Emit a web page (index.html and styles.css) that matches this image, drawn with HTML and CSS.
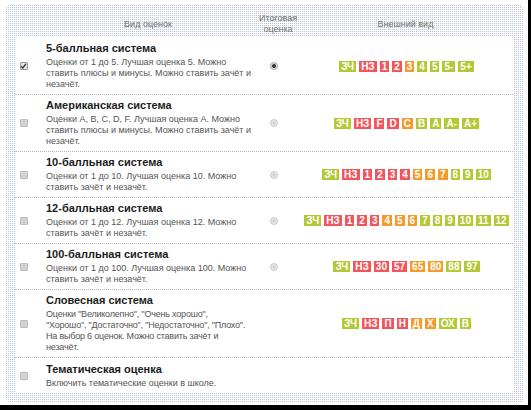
FILE: index.html
```html
<!DOCTYPE html>
<html lang="ru">
<head>
<meta charset="utf-8">
<title>Системы оценок</title>
<link rel="stylesheet" href="styles.css">
</head>
<body>
<div class="frame">
  <div class="head">
    <span></span>
    <span class="h-cell">Вид оценок</span>
    <span class="h-cell">Итоговая<br>оценка</span>
    <span class="h-cell">Внешний вид</span>
  </div>
  <div class="panel">
    <div class="row">
      <span class="cb checked"><svg viewBox="0 0 8 8" width="8" height="8"><path d="M1.3 4.2 L3.2 6.2 L6.8 1.6" fill="none" stroke="#333" stroke-width="1.6"/></svg></span>
      <div class="info">
        <div class="title">5-балльная система</div>
        <div class="desc">Оценки от 1 до 5. Лучшая оценка 5. Можно ставить плюсы и минусы. Можно ставить зачёт и незачёт.</div>
      </div>
      <div class="final"><span class="radio on"></span></div>
      <div class="marks">
        <span class="m g">ЗЧ</span><span class="m r">НЗ</span><span class="m r">1</span><span class="m r">2</span><span class="m o">3</span><span class="m g">4</span><span class="m g">5</span><span class="m g">5-</span><span class="m g">5+</span>
      </div>
    </div>
    <div class="row">
      <span class="cb"></span>
      <div class="info">
        <div class="title">Американская система</div>
        <div class="desc">Оценки A, B, C, D, F. Лучшая оценка A. Можно ставить плюсы и минусы. Можно ставить зачёт и незачёт.</div>
      </div>
      <div class="final"><span class="radio"></span></div>
      <div class="marks">
        <span class="m g">ЗЧ</span><span class="m r">НЗ</span><span class="m r">F</span><span class="m r">D</span><span class="m o">C</span><span class="m g">B</span><span class="m g">A</span><span class="m g">A-</span><span class="m g">A+</span>
      </div>
    </div>
    <div class="row">
      <span class="cb"></span>
      <div class="info">
        <div class="title">10-балльная система</div>
        <div class="desc">Оценки от 1 до 10. Лучшая оценка 10. Можно ставить зачёт и незачёт.</div>
      </div>
      <div class="final"><span class="radio"></span></div>
      <div class="marks">
        <span class="m g">ЗЧ</span><span class="m r">НЗ</span><span class="m r">1</span><span class="m r">2</span><span class="m r">3</span><span class="m r">4</span><span class="m o">5</span><span class="m o">6</span><span class="m o">7</span><span class="m g">8</span><span class="m g">9</span><span class="m g">10</span>
      </div>
    </div>
    <div class="row">
      <span class="cb"></span>
      <div class="info">
        <div class="title">12-балльная система</div>
        <div class="desc">Оценки от 1 до 12. Лучшая оценка 12. Можно ставить зачёт и незачёт.</div>
      </div>
      <div class="final"><span class="radio"></span></div>
      <div class="marks">
        <span class="m g">ЗЧ</span><span class="m r">НЗ</span><span class="m r">1</span><span class="m r">2</span><span class="m r">3</span><span class="m o">4</span><span class="m o">5</span><span class="m o">6</span><span class="m g">7</span><span class="m g">8</span><span class="m g">9</span><span class="m g">10</span><span class="m g">11</span><span class="m g">12</span>
      </div>
    </div>
    <div class="row">
      <span class="cb"></span>
      <div class="info">
        <div class="title">100-балльная система</div>
        <div class="desc">Оценки от 1 до 100. Лучшая оценка 100. Можно ставить зачёт и незачёт.</div>
      </div>
      <div class="final"><span class="radio"></span></div>
      <div class="marks">
        <span class="m g">ЗЧ</span><span class="m r">НЗ</span><span class="m r">30</span><span class="m r">57</span><span class="m o">65</span><span class="m o">80</span><span class="m g">88</span><span class="m g">97</span>
      </div>
    </div>
    <div class="row">
      <span class="cb"></span>
      <div class="info">
        <div class="title">Словесная система</div>
        <div class="desc quoted">Оценки "Великолепно", "Очень хорошо", <span class="keep">"Хорошо", "Достаточно", "Недостаточно", "Плохо".</span> На выбор 6 оценок. Можно ставить зачёт и незачёт.</div>
      </div>
      <div class="final"></div>
      <div class="marks">
        <span class="m g">ЗЧ</span><span class="m r">НЗ</span><span class="m r">П</span><span class="m r">Н</span><span class="m o">Д</span><span class="m o">Х</span><span class="m g">ОХ</span><span class="m g">В</span>
      </div>
    </div>
    <div class="row last">
      <span class="cb"></span>
      <div class="info">
        <div class="title">Тематическая оценка</div>
        <div class="desc">Включить тематические оценки в школе.</div>
      </div>
      <div class="final"></div>
      <div class="marks"></div>
    </div>
  </div>
</div>
</body>
</html>
```

FILE: styles.css
```css
html {
  background: #000;
}

body {
  margin: 0;
  width: 528px;
  height: 405px;
  overflow: hidden;
  background: #fff;
  font-family: "Liberation Sans", Arial, sans-serif;
}

/* dotted light frame around the settings table */
.frame {
  box-sizing: border-box;
  width: 517px;
  height: 398px;
  margin: 5px 0 0 6px;
  padding: 0 10px 10px 9px;
  border-radius: 4px;
  display: flex;
  flex-direction: column;
  background-color: #fff;
  background-image:
    linear-gradient(90deg, transparent 1px, #fff 1px),
    linear-gradient(180deg, #b7c1da 1px, #fff 1px);
  background-size: 2px 2px;
}

.head,
.row {
  display: grid;
  grid-template-columns: 23px 220px 40px 1fr;
  align-items: center;
}

.head {
  height: 32px;
  flex: none;
  box-sizing: border-box;
  padding-top: 6px;
}

.h-cell {
  text-align: center;
  font-size: 9px;
  line-height: 11px;
  color: #707070;
}

.panel {
  flex: 1;
  display: flex;
  flex-direction: column;
  background: #fff;
  border-radius: 4px;
}

.row {
  padding: 4px 0;
  border-bottom: 1px dotted #b5b5b5;
}

.row:first-child {
  padding-top: 5px;
}

.row.last {
  flex: 1;
  border-bottom: none;
}

.info {
  padding: 0 6px 0 8px;
}

.title {
  font-size: 11px;
  line-height: 13px;
  font-weight: bold;
  color: #1c1c1c;
}

.desc {
  margin-top: 2px;
  font-size: 9px;
  line-height: 11px;
  color: #555;
}

/* the list of quoted grade names is set a little tighter */
.desc.quoted {
  letter-spacing: -0.2px;
}

/* second line of the quoted list stays on one line of its own */
.keep {
  display: block;
  white-space: nowrap;
}

/* checkboxes */
.cb {
  justify-self: start;
  margin-left: 5px;
  width: 8px;
  height: 8px;
  box-sizing: border-box;
  border: 1px solid #bdbdbd;
  background: #d2d2d2;
  border-radius: 1px;
}

.cb.checked {
  border-color: #9a9a9a;
  background: #e4e4e4;
  display: flex;
}

.cb.checked svg {
  margin: -1px 0 0 -1px;
}

/* radio buttons */
.final {
  display: flex;
  justify-content: center;
  padding-right: 8px;
}

.radio {
  width: 8px;
  height: 8px;
  box-sizing: border-box;
  border-radius: 50%;
  border: 1px solid #c6c6c6;
  background: radial-gradient(circle, #d4d4d4 0 1.5px, #ececec 2.2px);
}

.radio.on {
  border-color: #a8a8a8;
  background: radial-gradient(circle, #3a3a3a 0 1.6px, #d8d8d8 2.2px);
}

/* grade chips */
.marks {
  display: flex;
  justify-content: center;
  gap: 3px;
  padding-left: 2px;
}

.m {
  height: 11px;
  padding: 0 2px;
  font-size: 10px;
  line-height: 11px;
  font-weight: bold;
  color: #fff;
}

.m.g {
  background: #b3c832;
}

.m.r {
  background: #f2555c;
}

.m.o {
  background: #f59b2c;
}
```
